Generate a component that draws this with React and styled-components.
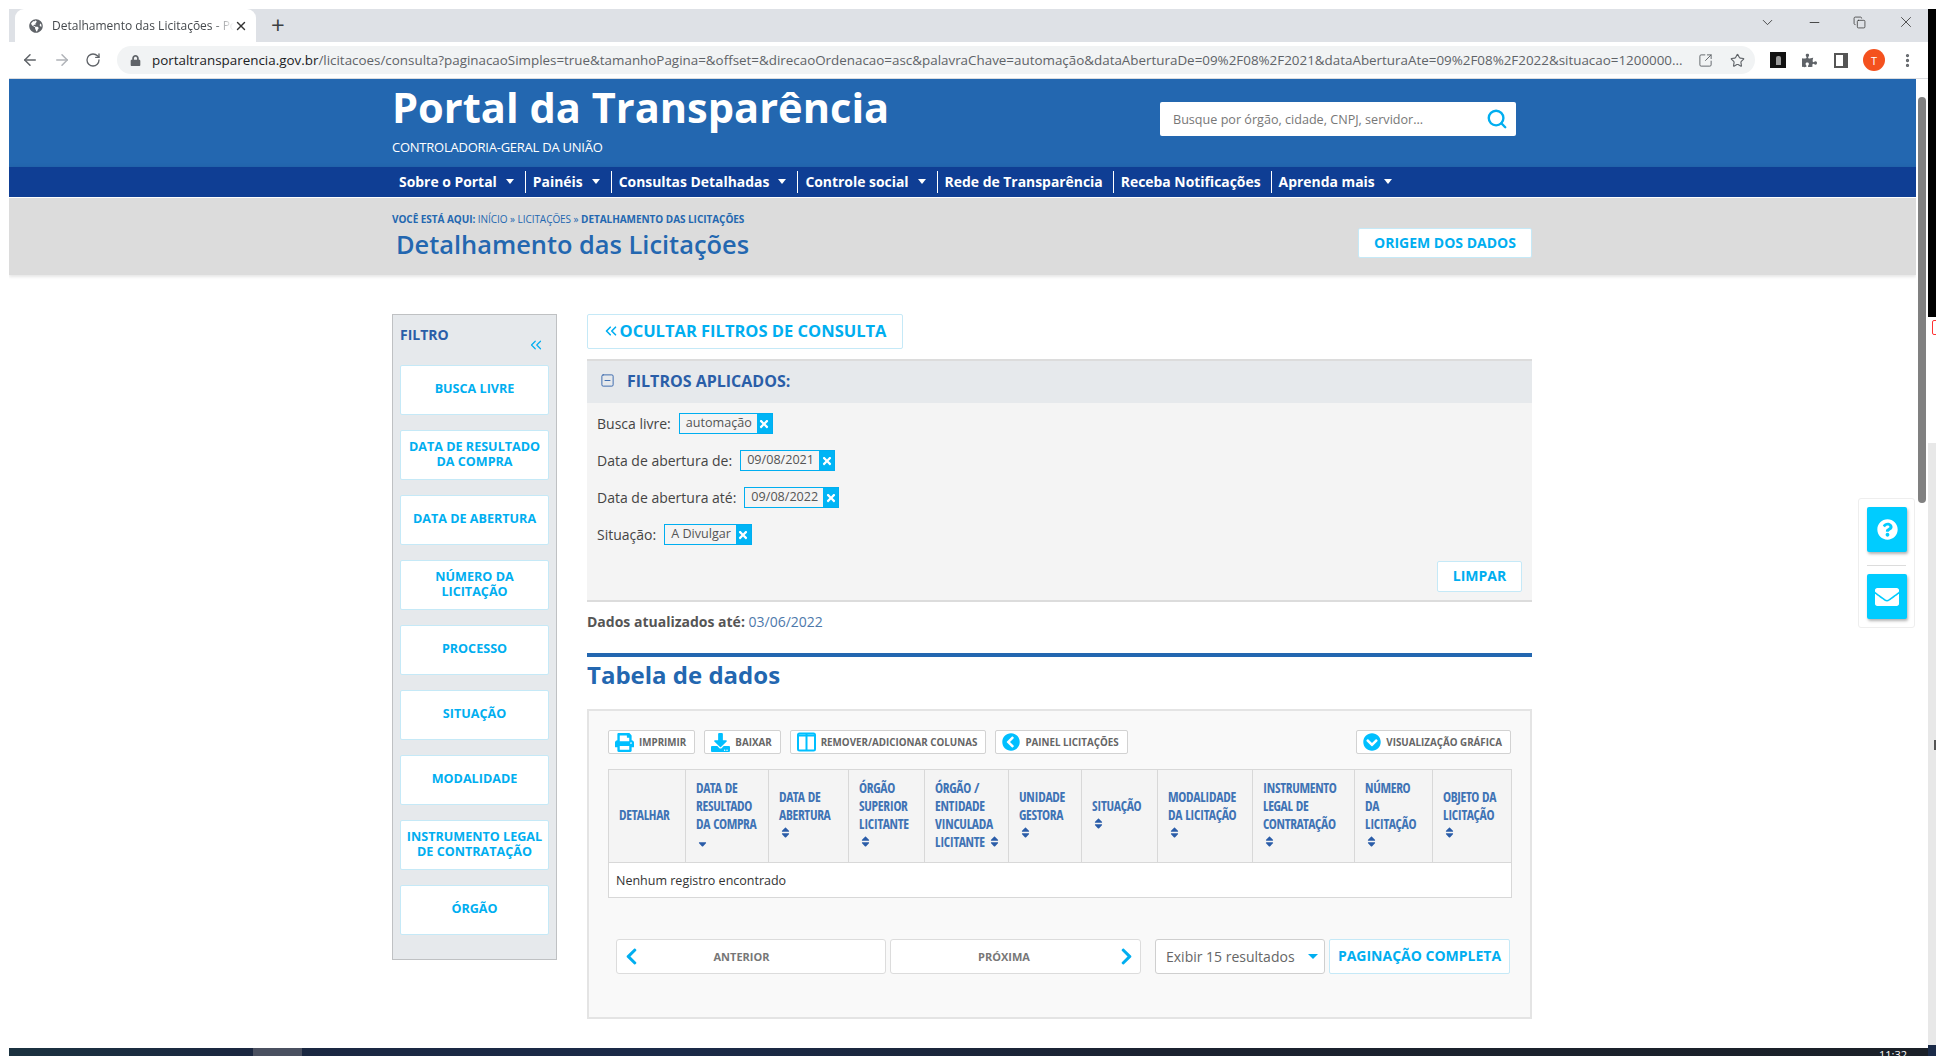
import React from 'react';
import styled, { createGlobalStyle } from 'styled-components';
import {
  FaChevronCircleDown,
  FaChevronCircleLeft,
  FaChevronLeft,
  FaChevronRight,
  FaDownload,
  FaEnvelope,
  FaGlobeAmericas,
  FaLock,
  FaPrint,
  FaPuzzlePiece,
  FaQuestionCircle,
  FaSort,
  FaSortDown,
  FaTimes,
} from 'react-icons/fa';
import {
  ArrowLeft,
  ArrowRight,
  ChevronDown,
  ChevronsLeft,
  Copy,
  EllipsisVertical,
  Minus,
  RotateCw,
  Search,
  SquareArrowOutUpRight,
  SquareMinus,
  Star,
  X,
} from 'lucide-react';

const BLUE = '#2367b0';
const SKY = '#00aef0';
const FONT = '"Open Sans", "Noto Sans", sans-serif';

const GlobalStyle = createGlobalStyle`
  html, body { margin: 0; padding: 0; background: #fff; overflow: hidden; }
  * { box-sizing: border-box; }
  body { font-family: ${FONT}; }
`;

const Screen = styled.div`
  display: flex;
  width: 1936px;
  height: 1056px;
  overflow: hidden;
  background: #fff;
`;

const Browser = styled.div`
  display: flex;
  flex-direction: column;
  width: 1928px;
  height: 1056px;
  padding: 9px 0 0 9px;
`;

const TabBar = styled.div`
  display: flex;
  align-items: flex-end;
  flex: none;
  height: 33px;
  padding-left: 6px;
  background: #dee1e6;
`;

const Tab = styled.div`
  display: flex;
  align-items: center;
  width: 241px;
  height: 33px;
  padding: 0 8px 0 14px;
  background: #fff;
  border-radius: 9px 9px 0 0;
  color: #45494d;
  font-size: 12px;
`;

const TabTitle = styled.span`
  flex: 1;
  margin-left: 9px;
  overflow: hidden;
  white-space: nowrap;
  mask-image: linear-gradient(to right, #000 88%, transparent);
`;

const NewTab = styled.span`
  margin: 0 0 3px 15px;
  color: #3c4043;
  font-size: 24px;
  font-weight: 400;
  line-height: 28px;
`;

const WindowControls = styled.div`
  display: flex;
  align-items: center;
  gap: 31px;
  align-self: center;
  margin: 0 13px 7px auto;
  color: #333;
`;

const AddressRow = styled.div`
  display: flex;
  align-items: center;
  flex: none;
  height: 37px;
  padding-left: 12px;
  border-bottom: 1px solid #dadce0;
  color: #5f6368;
`;

const NavIcons = styled.div`
  display: flex;
  align-items: center;
  gap: 14px;
  width: 96px;
`;

const AddressPill = styled.div`
  display: flex;
  align-items: center;
  width: 1638px;
  height: 28px;
  padding: 0 10px 0 13px;
  background: #f1f3f4;
  border-radius: 14px;
  font-size: 13.4px;
`;

const Url = styled.span`
  flex: 1;
  margin-left: 11px;
  overflow: hidden;
  color: #5f6368;
  white-space: nowrap;
  b { color: #202124; font-weight: 400; }
`;

const ExtensionIcons = styled.div`
  display: flex;
  align-items: center;
  gap: 16px;
  margin-left: 15px;
`;

const BlackBadge = styled.span`
  display: flex;
  align-items: center;
  justify-content: center;
  width: 16px;
  height: 16px;
  background: #111;
  &::after {
    content: '';
    width: 5px;
    height: 9px;
    background: #999;
    border-radius: 2px 2px 0 0;
  }
`;

const PanelIcon = styled.span`
  width: 14px;
  height: 15px;
  margin-left: 1px;
  border: 2px solid #555;
  border-right-width: 5px;
`;

const Avatar = styled.span`
  display: flex;
  align-items: center;
  justify-content: center;
  width: 22px;
  height: 22px;
  margin-left: -1px;
  background: #f4511e;
  border-radius: 50%;
  color: #fff;
  font-size: 11px;
`;

const MenuDots = styled(EllipsisVertical)`
  margin-left: -2px;
`;

const StarIcon = styled(Star)`
  margin-left: 17px;
`;

const Viewport = styled.div`
  position: relative;
  display: flex;
  flex: 1;
  min-height: 0;
`;

const Page = styled.div`
  width: 1907px;
  height: 100%;
  overflow: hidden;
`;

const ScrollTrack = styled.div`
  width: 12px;
  padding: 18px 2px 0;
`;

const ScrollThumb = styled.div`
  height: 406px;
  background: #808080;
  border-radius: 4px;
`;

const Header = styled.header`
  background: ${BLUE};
`;

const Container = styled.div`
  width: 1140px;
  margin-left: 383px;
`;

const HeaderInner = styled(Container)`
  display: flex;
  justify-content: space-between;
  height: 88px;
`;

const Brand = styled.div`
  padding-top: 1px;
  color: #fff;
`;

const BrandName = styled.div`
  font-size: 41.6px;
  font-weight: 700;
  line-height: 54px;
`;

const BrandSub = styled.div`
  margin-top: 4px;
  font-size: 13px;
  letter-spacing: -0.24px;
  line-height: 18px;
`;

const SearchBox = styled.div`
  display: flex;
  align-items: center;
  justify-content: space-between;
  width: 356px;
  height: 34px;
  margin: 23px 16px 0 0;
  padding: 0 8px 0 13px;
  background: #fff;
  border-radius: 2px;
  color: #777;
  font-size: 12.6px;
  svg { color: ${SKY}; }
`;

const NavBar = styled.nav`
  height: 31px;
  background: #0f3e94;
  border-bottom: 1px solid #fff;
  box-shadow: 0 3px 6px rgba(0, 0, 0, 0.25);
`;

const NavList = styled(Container)`
  display: flex;
  align-items: center;
  height: 30px;
`;

const NavItem = styled.div`
  display: flex;
  align-items: center;
  gap: 9px;
  height: 22px;
  padding: 0 ${({ $caret }) => ($caret ? '11px' : '10px')} 2px 7px;
  border-left: ${({ $first }) => ($first ? '0' : '1px solid #fff')};
  color: #fff;
  font-size: 13.92px;
  font-weight: 700;
  white-space: nowrap;
`;

const Caret = styled.span`
  width: 0;
  height: 0;
  border-top: 5px solid #fff;
  border-left: 4.5px solid transparent;
  border-right: 4.5px solid transparent;
`;

const TitleBand = styled.div`
  height: 77px;
  background: #dcdcdc;
  box-shadow: 0 2px 3px rgba(0, 0, 0, 0.1);
`;

const TitleInner = styled(Container)`
  display: flex;
  justify-content: space-between;
`;

const Crumbs = styled.div`
  padding-top: 14px;
  color: ${BLUE};
  font-size: 10px;
  letter-spacing: -0.05px;
  line-height: 14px;
  b { font-weight: 700; }
`;

const PageTitle = styled.h1`
  margin: 2px 0 0 4px;
  color: ${BLUE};
  font-size: 25.4px;
  font-weight: 600;
  line-height: 33px;
`;

const SkyButton = styled.div`
  display: flex;
  align-items: center;
  justify-content: center;
  width: ${({ $w }) => $w}px;
  height: ${({ $h }) => $h}px;
  padding-bottom: 2px;
  background: #fff;
  border: 1px solid #c5e9f7;
  border-radius: 2px;
  color: ${SKY};
  font-size: 14px;
  font-weight: 700;
  text-align: center;
  white-space: nowrap;
`;

const OriginButton = styled(SkyButton)`
  margin-top: 30px;
`;

const Content = styled(Container)`
  display: flex;
  gap: 30px;
  padding-top: 39px;
`;

const Sidebar = styled.aside`
  flex: none;
  align-self: flex-start;
  width: 165px;
  padding: 0 7px 24px;
  background: #e6e9ec;
  border: 1px solid #bfc1c3;
`;

const SidebarHead = styled.div`
  display: flex;
  justify-content: space-between;
  height: 50px;
  padding: 10px 4px 0 0;
  color: #2a5ea8;
  font-size: 14px;
  font-weight: 700;
  svg { margin-top: 11px; color: ${SKY}; }
`;

const FilterList = styled.div`
  display: flex;
  flex-direction: column;
  gap: 15px;
`;

const FilterButton = styled(SkyButton)`
  width: 149px;
  height: 50px;
  padding: 0 0 3px;
  font-size: 12.6px;
  line-height: 15px;
  white-space: pre-line;
`;

const MainColumn = styled.main`
  flex: 1;
  min-width: 0;
`;

const HideButton = styled(SkyButton)`
  padding-right: 2px;
  font-size: 16.5px;
`;

const AppliedHead = styled.div`
  display: flex;
  align-items: center;
  gap: 12px;
  height: 44px;
  margin-top: 10px;
  padding: 0 0 3px 13px;
  background: #e6e9ec;
  border-top: 2px solid #dcdcdc;
  color: #2a5ea8;
  font-size: 16px;
  font-weight: 700;
`;

const AppliedBody = styled.div`
  height: 199px;
  padding: 10px 10px 0;
  background: #f4f4f4;
  border-bottom: 2px solid #dcdcdc;
`;

const ChipRow = styled.div`
  display: flex;
  align-items: center;
  gap: 8px;
  height: 21px;
  margin-bottom: 16px;
  color: #444;
  font-size: 14px;
`;

const Chip = styled.span`
  display: flex;
  height: 21px;
  border: 1px solid #00aef0;
  color: #555;
  font-size: 12.6px;
  line-height: 17px;
`;

const ChipText = styled.span`
  padding: 0 5px 0 6px;
`;

const ChipClose = styled.span`
  display: flex;
  align-items: center;
  justify-content: center;
  width: 15px;
  background: #00b4f5;
  color: #fff;
`;

const ClearRow = styled.div`
  display: flex;
  justify-content: flex-end;
`;

const Updated = styled.p`
  height: 51px;
  margin: 0;
  padding-top: 10px;
  color: #555;
  font-size: 14px;
  line-height: 20px;
  b { font-weight: 700; }
  span { color: #4d78ab; }
`;

const DataHeading = styled.h2`
  height: 56px;
  margin: 0;
  border-top: 4px solid ${BLUE};
  color: ${BLUE};
  font-size: 24px;
  font-weight: 700;
  line-height: 36px;
`;

const TablePanel = styled.section`
  height: 310px;
  padding: 19px 19px 0;
  background: #f9f9f9;
  border: 2px solid #e4e4e4;
`;

const Toolbar = styled.div`
  display: flex;
  gap: 9px;
  height: 39px;
`;

const ToolButton = styled.div`
  display: flex;
  align-items: center;
  gap: 5px;
  height: 24px;
  margin-left: ${({ $push }) => ($push ? 'auto' : '0')};
  padding: 0 8px 0 6px;
  background: #fff;
  border: 1px solid #d2d2d2;
  border-radius: 2px;
  color: #666;
  font-size: 9.8px;
  font-weight: 700;
  white-space: nowrap;
  svg { color: #00bfff; }
`;

const DataTable = styled.table`
  width: 903px;
  border-collapse: collapse;
  table-layout: fixed;
  background: #fff;
`;

const HeadCell = styled.th`
  width: ${({ $w }) => $w}px;
  height: 93px;
  padding: 0 0 2px 10px;
  background: #f4f4f4;
  border: 1px solid #d8d8d8;
  color: #3f73b5;
  font-family: "Liberation Sans Narrow", "Open Sans Condensed", ${FONT};
  font-size: 13.5px;
  font-weight: 400;
  letter-spacing: -0.3px;
  line-height: 18px;
  text-align: left;
  vertical-align: middle;
`;

const SortIcon = styled.span`
  display: ${({ $inline }) => ($inline ? 'inline' : 'block')};
  margin-left: ${({ $inline }) => ($inline ? '3px' : '0')};
  line-height: 18px;
  svg { vertical-align: -1px; }
`;

const EmptyCell = styled.td`
  height: 35px;
  padding: 0 0 0 7px;
  border: 1px solid #d8d8d8;
  color: #333;
  font-size: 12.5px;
`;

const Pagination = styled.div`
  display: flex;
  gap: 4px;
  margin: 41px 0 0 8px;
`;

const PageButton = styled.div`
  display: flex;
  align-items: center;
  width: ${({ $w }) => $w}px;
  height: 35px;
  padding: ${({ $pad }) => $pad};
  background: #fff;
  border: 1px solid #dcdcdc;
  border-radius: 3px;
  color: #777;
  font-size: 11px;
  font-weight: 700;
  svg { flex: none; color: ${SKY}; }
`;

const PageLabel = styled.span`
  flex: 1;
  text-align: center;
`;

const PageSize = styled.div`
  display: flex;
  align-items: center;
  justify-content: space-between;
  width: 170px;
  height: 35px;
  margin-left: 10px;
  padding: 0 6px 0 10px;
  background: #fff;
  border: 1px solid #cfcfcf;
  border-radius: 3px;
  color: #666;
  font-size: 14px;
`;

const SelectCaret = styled.span`
  width: 0;
  height: 0;
  border-top: 5px solid ${SKY};
  border-left: 5px solid transparent;
  border-right: 5px solid transparent;
`;

const FloatBox = styled.div`
  position: absolute;
  top: 419px;
  left: 1849px;
  display: flex;
  flex-direction: column;
  width: 57px;
  height: 130px;
  padding: 8px;
  background: #fff;
  border: 1px solid #eee;
  border-radius: 3px;
`;

const FloatButton = styled.div`
  display: flex;
  align-items: center;
  justify-content: center;
  width: 40px;
  height: 46px;
  background: #00ccff;
  border-radius: 2px;
  box-shadow: 1px 2px 3px rgba(0, 0, 0, 0.3);
  color: #fff;
`;

const FloatRule = styled.div`
  height: 2px;
  margin: 13px 0 8px;
  background: #dcdcdc;
`;

const Taskbar = styled.div`
  position: relative;
  flex: none;
  height: 8px;
  overflow: hidden;
  background: linear-gradient(90deg, #1b3240, #1a2740 12%, #1a2a48 35%, #1b2230 60%, #1a2028);
`;

const TaskSlot = styled.span`
  position: absolute;
  top: 0;
  left: 244px;
  width: 49px;
  height: 8px;
  background: #4a5060;
`;

const TaskClock = styled.span`
  position: absolute;
  top: 0;
  left: 1870px;
  color: #fff;
  font-size: 11px;
  line-height: 14px;
`;

const DesktopEdge = styled.div`
  display: flex;
  flex-direction: column;
  flex: none;
  width: 8px;
  height: 1056px;
  padding-top: 9px;
`;

const EdgeBlack = styled.div`
  height: 308px;
  background: #000;
`;

const EdgeWhite = styled.div`
  height: 126px;
  padding: 3px 0 0 4px;
  overflow: hidden;
`;

const EdgeRedMark = styled.div`
  width: 12px;
  height: 15px;
  border: 1px solid #f33;
  border-radius: 2px;
`;

const EdgeGrey = styled.div`
  flex: 1;
  padding: 297px 0 0 6px;
  background: #e8e8e8;
`;

const EdgeTick = styled.div`
  width: 2px;
  height: 10px;
  background: #555;
`;

const EdgeNavy = styled.div`
  height: 11px;
  background: #1a2a48;
`;

const ColumnsIcon = () => (
  <svg width="19" height="20" viewBox="0 0 19 20" fill="none" stroke="currentColor" strokeWidth="2">
    <rect x="1" y="1.5" width="17" height="17" rx="1.5" />
    <path d="M9.5 2v16M1 3.5h17" />
  </svg>
);

const NAV = [
  { label: 'Sobre o Portal', caret: true },
  { label: 'Painéis', caret: true },
  { label: 'Consultas Detalhadas', caret: true },
  { label: 'Controle social', caret: true },
  { label: 'Rede de Transparência' },
  { label: 'Receba Notificações' },
  { label: 'Aprenda mais', caret: true },
];

const FILTERS = [
  'BUSCA LIVRE',
  'DATA DE RESULTADO\nDA COMPRA',
  'DATA DE ABERTURA',
  'NÚMERO DA\nLICITAÇÃO',
  'PROCESSO',
  'SITUAÇÃO',
  'MODALIDADE',
  'INSTRUMENTO LEGAL\nDE CONTRATAÇÃO',
  'ÓRGÃO',
];

const CHIPS = [
  ['Busca livre:', 'automação'],
  ['Data de abertura de:', '09/08/2021'],
  ['Data de abertura até:', '09/08/2022'],
  ['Situação:', 'A Divulgar'],
];

const COLUMNS = [
  { w: 77, lines: ['DETALHAR'] },
  { w: 83, lines: ['DATA DE', 'RESULTADO', 'DA COMPRA'], icon: 'down' },
  { w: 80, lines: ['DATA DE', 'ABERTURA'], icon: 'sort' },
  { w: 76, lines: ['ÓRGÃO', 'SUPERIOR', 'LICITANTE'], icon: 'sort' },
  { w: 84, lines: ['ÓRGÃO /', 'ENTIDADE', 'VINCULADA', 'LICITANTE'], icon: 'sort', inline: true },
  { w: 73, lines: ['UNIDADE', 'GESTORA'], icon: 'sort' },
  { w: 76, lines: ['SITUAÇÃO'], icon: 'sort' },
  { w: 95, lines: ['MODALIDADE', 'DA LICITAÇÃO'], icon: 'sort' },
  { w: 102, lines: ['INSTRUMENTO', 'LEGAL DE', 'CONTRATAÇÃO'], icon: 'sort' },
  { w: 78, lines: ['NÚMERO', 'DA', 'LICITAÇÃO'], icon: 'sort' },
  { w: 79, lines: ['OBJETO DA', 'LICITAÇÃO'], icon: 'sort' },
];

const URL_REST =
  '/licitacoes/consulta?paginacaoSimples=true&tamanhoPagina=&offset=&direcaoOrdenacao=asc&palavraChave=automação&dataAberturaDe=09%2F08%2F2021&dataAberturaAte=09%2F08%2F2022&situacao=1200000...';

const ColumnTitle = ({ column }) => (
  <HeadCell $w={column.w}>
    {column.lines.map((line, i) => (
      <React.Fragment key={line}>
        {i > 0 && <br />}
        {line}
      </React.Fragment>
    ))}
    {column.icon && (
      <SortIcon $inline={column.inline}>
        {column.icon === 'sort' ? <FaSort size={13} color="#2a5ca8" /> : <FaSortDown size={13} color="#2a5ca8" />}
      </SortIcon>
    )}
  </HeadCell>
);

const App = () => (
  <Screen>
    <GlobalStyle />
    <Browser>
      <TabBar>
        <Tab>
          <FaGlobeAmericas size={14} color="#5f6368" />
          <TabTitle>Detalhamento das Licitações - Po</TabTitle>
          <X size={14} color="#333" strokeWidth={2.4} />
        </Tab>
        <NewTab>+</NewTab>
        <WindowControls>
          <ChevronDown size={17} strokeWidth={1.2} />
          <Minus size={15} strokeWidth={1.4} />
          <Copy size={13} strokeWidth={1.4} />
          <X size={18} strokeWidth={1.1} />
        </WindowControls>
      </TabBar>
      <AddressRow>
        <NavIcons>
          <ArrowLeft size={18} />
          <ArrowRight size={18} color="#b0b3b8" />
          <RotateCw size={16} />
        </NavIcons>
        <AddressPill>
          <FaLock size={11} />
          <Url>
            <b>portaltransparencia.gov.br</b>
            {URL_REST}
          </Url>
          <SquareArrowOutUpRight size={15} strokeWidth={1.5} />
          <StarIcon size={15} strokeWidth={1.8} />
        </AddressPill>
        <ExtensionIcons>
          <BlackBadge />
          <FaPuzzlePiece size={15} />
          <PanelIcon />
          <Avatar>T</Avatar>
          <MenuDots size={17} strokeWidth={2.6} />
        </ExtensionIcons>
      </AddressRow>
      <Viewport>
        <Page>
          <Header>
            <HeaderInner>
              <Brand>
                <BrandName>Portal da Transparência</BrandName>
                <BrandSub>CONTROLADORIA-GERAL DA UNIÃO</BrandSub>
              </Brand>
              <SearchBox>
                Busque por órgão, cidade, CNPJ, servidor...
                <Search size={22} strokeWidth={2.6} />
              </SearchBox>
            </HeaderInner>
          </Header>
          <NavBar>
            <NavList>
              {NAV.map((item, i) => (
                <NavItem key={item.label} $first={i === 0} $caret={item.caret}>
                  {item.label}
                  {item.caret && <Caret />}
                </NavItem>
              ))}
            </NavList>
          </NavBar>
          <TitleBand>
            <TitleInner>
              <div>
                <Crumbs>
                  <b>VOCÊ ESTÁ AQUI:</b> INÍCIO » LICITAÇÕES » <b>DETALHAMENTO DAS LICITAÇÕES</b>
                </Crumbs>
                <PageTitle>Detalhamento das Licitações</PageTitle>
              </div>
              <OriginButton $w={174} $h={30}>ORIGEM DOS DADOS</OriginButton>
            </TitleInner>
          </TitleBand>
          <Content>
            <Sidebar>
              <SidebarHead>
                FILTRO
                <ChevronsLeft size={18} strokeWidth={1.6} />
              </SidebarHead>
              <FilterList>
                {FILTERS.map((label) => (
                  <FilterButton key={label}>{label}</FilterButton>
                ))}
              </FilterList>
            </Sidebar>
            <MainColumn>
              <HideButton $w={316} $h={35}>
                <ChevronsLeft size={18} strokeWidth={2.2} />
                OCULTAR FILTROS DE CONSULTA
              </HideButton>
              <AppliedHead>
                <SquareMinus size={15} strokeWidth={1.4} />
                FILTROS APLICADOS:
              </AppliedHead>
              <AppliedBody>
                {CHIPS.map(([label, value]) => (
                  <ChipRow key={label}>
                    {label}
                    <Chip>
                      <ChipText>{value}</ChipText>
                      <ChipClose>
                        <FaTimes size={12} />
                      </ChipClose>
                    </Chip>
                  </ChipRow>
                ))}
                <ClearRow>
                  <SkyButton $w={85} $h={31}>LIMPAR</SkyButton>
                </ClearRow>
              </AppliedBody>
              <Updated>
                <b>Dados atualizados até:</b> <span>03/06/2022</span>
              </Updated>
              <DataHeading>Tabela de dados</DataHeading>
              <TablePanel>
                <Toolbar>
                  <ToolButton>
                    <FaPrint size={19} />
                    IMPRIMIR
                  </ToolButton>
                  <ToolButton>
                    <FaDownload size={19} />
                    BAIXAR
                  </ToolButton>
                  <ToolButton>
                    <ColumnsIcon />
                    REMOVER/ADICIONAR COLUNAS
                  </ToolButton>
                  <ToolButton>
                    <FaChevronCircleLeft size={18} />
                    PAINEL LICITAÇÕES
                  </ToolButton>
                  <ToolButton $push>
                    <FaChevronCircleDown size={18} />
                    VISUALIZAÇÃO GRÁFICA
                  </ToolButton>
                </Toolbar>
                <DataTable>
                  <thead>
                    <tr>
                      {COLUMNS.map((column) => (
                        <ColumnTitle key={column.lines.join(' ')} column={column} />
                      ))}
                    </tr>
                  </thead>
                  <tbody>
                    <tr>
                      <EmptyCell colSpan={COLUMNS.length}>Nenhum registro encontrado</EmptyCell>
                    </tr>
                  </tbody>
                </DataTable>
                <Pagination>
                  <PageButton $w={270} $pad="0 43px 0 5px">
                    <FaChevronLeft size={19} />
                    <PageLabel>ANTERIOR</PageLabel>
                  </PageButton>
                  <PageButton $w={251} $pad="0 4px 0 0">
                    <PageLabel>PRÓXIMA</PageLabel>
                    <FaChevronRight size={19} />
                  </PageButton>
                  <PageSize>
                    Exibir 15 resultados
                    <SelectCaret />
                  </PageSize>
                  <SkyButton $w={181} $h={35}>PAGINAÇÃO COMPLETA</SkyButton>
                </Pagination>
              </TablePanel>
            </MainColumn>
          </Content>
        </Page>
        <ScrollTrack>
          <ScrollThumb />
        </ScrollTrack>
        <FloatBox>
          <FloatButton>
            <FaQuestionCircle size={21} />
          </FloatButton>
          <FloatRule />
          <FloatButton>
            <FaEnvelope size={24} />
          </FloatButton>
        </FloatBox>
      </Viewport>
      <Taskbar>
        <TaskSlot />
        <TaskClock>11:32</TaskClock>
      </Taskbar>
    </Browser>
    <DesktopEdge>
      <EdgeBlack />
      <EdgeWhite>
        <EdgeRedMark />
      </EdgeWhite>
      <EdgeGrey>
        <EdgeTick />
      </EdgeGrey>
      <EdgeNavy />
    </DesktopEdge>
  </Screen>
);

export default App;
